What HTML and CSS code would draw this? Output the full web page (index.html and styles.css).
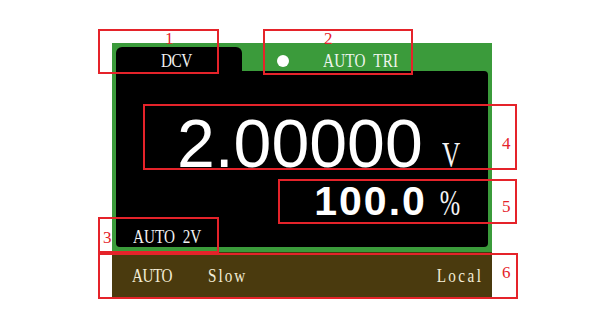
FILE: index.html
```html
<!DOCTYPE html>
<html>
<head>
<meta charset="utf-8">
<link rel="stylesheet" href="styles.css">
</head>
<body>
<div class="stage">
  <div class="device">
    <div class="screen">
      <div class="tabs">
        <div class="tab"><span class="mono">DCV</span></div>
        <div class="status">
          <span class="dot"></span>
          <span class="mono status-text">AUTO TRI</span>
        </div>
      </div>
      <div class="panel">
        <div class="main-row">
          <span class="value">2.00000</span>
          <span class="mono unit">V</span>
        </div>
        <div class="sub-row">
          <span class="percent">100.0</span>
          <span class="mono unit pct">%</span>
        </div>
        <div class="range"><span class="mono">AUTO 2V</span></div>
      </div>
    </div>
    <div class="statusbar">
      <span class="mono">AUTO</span>
      <span class="mono speed">Slow</span>
      <span class="mono mode">Local</span>
    </div>
  </div>

  <div class="mark box1"></div>
  <div class="mark box2"></div>
  <div class="mark box3"></div>
  <div class="mark box4"></div>
  <div class="mark box5"></div>
  <div class="mark box6"></div>
  <span class="num n1">1</span>
  <span class="num n2">2</span>
  <span class="num n3">3</span>
  <span class="num n4">4</span>
  <span class="num n5">5</span>
  <span class="num n6">6</span>
</div>
</body>
</html>
```

FILE: styles.css
```css
html, body {
  margin: 0;
  padding: 0;
  background: #ffffff;
}

.stage {
  position: relative;
  width: 600px;
  height: 325px;
  overflow: hidden;
}

.device {
  margin-left: 112px;
  padding-top: 43px;
  width: 380px;
}

.screen {
  background: #3b9b3b;
  padding: 4px 4px 5px 4px;
  box-sizing: border-box;
  height: 209px;
  display: flex;
  flex-direction: column;
}

/* narrow serif lettering of the instrument display */
.mono {
  font-family: "Liberation Serif", "Times New Roman", serif;
  font-size: 19px;
  line-height: 1;
  letter-spacing: -0.6px;
  word-spacing: 5px;
  display: inline-block;
  transform: scale(0.8, 1);
  transform-origin: 0 84%;
  white-space: pre;
}

.tabs {
  display: flex;
  height: 24px;
}

.tab {
  width: 126px;
  height: 24px;
  box-sizing: border-box;
  background: #000;
  border-radius: 6px 6px 0 0;
  color: #f2f2f2;
  padding-top: 4px;
  padding-left: 45px;
}

.status {
  display: flex;
  align-items: flex-start;
  color: #eef5ee;
  padding-top: 4px;
}

.dot {
  width: 12px;
  height: 12px;
  border-radius: 50%;
  background: #ffffff;
  margin-left: 35px;
  margin-top: 4px;
}

.status-text {
  margin-left: 34px;
  letter-spacing: 0.2px;
}

.panel {
  flex: 1;
  background: #000;
  border-radius: 0 4px 4px 4px;
  display: flex;
  flex-direction: column;
  padding-top: 38px;
  padding-bottom: 1px;
  color: #ffffff;
}

.main-row {
  display: flex;
  justify-content: flex-end;
  align-items: baseline;
  padding-right: 28px;
  height: 68px;
}

.value {
  font-family: "Liberation Sans", Arial, sans-serif;
  font-size: 68px;
  line-height: 68px;
  margin-right: 12px;
}

.unit {
  font-size: 35px;
  letter-spacing: 0;
  transform: scale(0.72, 1);
  transform-origin: 100% 84%;
  color: #f4f4f4;
}

.unit.pct {
  transform: scale(0.7, 1);
}

.sub-row {
  display: flex;
  justify-content: flex-end;
  align-items: baseline;
  padding-right: 28px;
  margin-top: 4px;
  height: 41px;
}

.percent {
  font-family: "Liberation Sans", Arial, sans-serif;
  font-weight: bold;
  font-size: 41px;
  line-height: 41px;
  letter-spacing: 2px;
  margin-right: 4px;
}

.range {
  margin-top: auto;
  padding-left: 17px;
  height: 19px;
  color: #f2f2f2;
}

.range .mono {
  letter-spacing: 0px;
}

.statusbar {
  background: #4a3a0e;
  height: 45px;
  display: flex;
  align-items: flex-start;
  padding: 14px 9px 0 20px;
  box-sizing: border-box;
  color: #f3ecd6;
}

.speed {
  margin-left: 26px;
  letter-spacing: 2.5px;
}

.mode {
  margin-left: auto;
  letter-spacing: 3px;
  transform-origin: 100% 84%;
}

.mark {
  position: absolute;
  border: 2px solid #e5232a;
  box-sizing: border-box;
}

.box1 { left: 98px; top: 29px; width: 121px; height: 45px; }
.box2 { left: 263px; top: 29px; width: 150px; height: 46px; }
.box3 { left: 98px; top: 217px; width: 121px; height: 36px; }
.box4 { left: 143px; top: 104px; width: 374px; height: 66px; }
.box5 { left: 278px; top: 179px; width: 239px; height: 45px; }
.box6 { left: 98px; top: 253px; width: 420px; height: 46px; }

.num {
  position: absolute;
  font-family: "Liberation Serif", "Times New Roman", serif;
  font-size: 17px;
  line-height: 1;
  color: #e5232a;
}

.n1 { left: 165px; top: 30px; }
.n2 { left: 324px; top: 30px; }
.n3 { left: 103px; top: 229px; }
.n4 { left: 502px; top: 135px; }
.n5 { left: 502px; top: 198px; }
.n6 { left: 502px; top: 264px; }
```
